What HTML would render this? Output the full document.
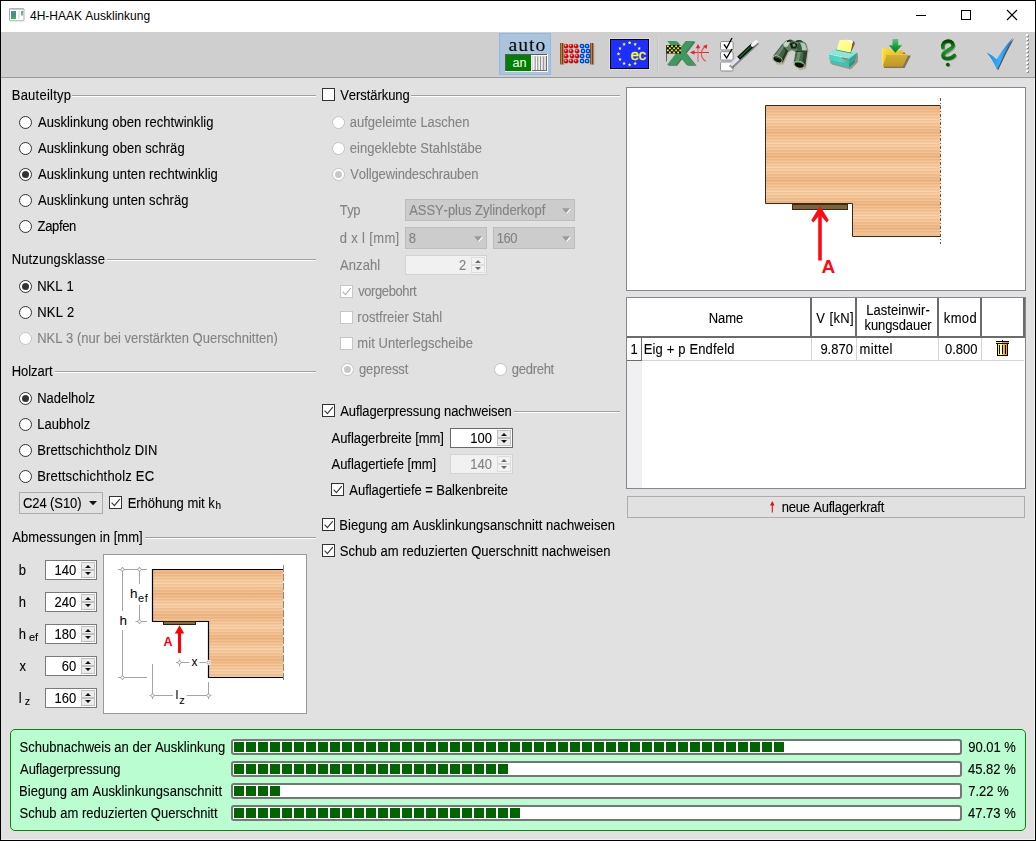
<!DOCTYPE html>
<html lang="de">
<head>
<meta charset="utf-8">
<title>4H-HAAK Ausklinkung</title>
<style>
*{box-sizing:border-box;margin:0;padding:0}
html,body{width:1036px;height:841px;overflow:hidden;background:#e1e1e1}
body{font-family:"Liberation Sans",Arial,sans-serif;font-size:13px;color:#000;position:relative;font-kerning:none}
#win{position:absolute;left:0;top:0;width:1036px;height:841px;background:#e1e1e1;overflow:hidden}
#frame{position:absolute;left:0;top:0;width:1036px;height:841px;border:1px solid #000;pointer-events:none;z-index:50}
#frame2{position:absolute;left:1px;top:78px;width:1034px;height:762px;border:1px solid #efefef;border-top:none;border-left:none;pointer-events:none;z-index:49}
.abs{position:absolute}
.t{position:absolute;white-space:nowrap;font-size:13px;line-height:16px;height:16px;transform:scaleY(1.075);transform-origin:0 12.5px;color:#000;-webkit-text-stroke:0.1px currentColor}
.t.dis{color:#838383}
.t sub{font-size:10px;vertical-align:baseline;position:relative;top:2px;line-height:0}
#title{position:absolute;left:0;top:0;width:1036px;height:32px;background:#fff}
#title .cap{position:absolute;left:30px;top:8px;font-size:12px;line-height:16px;white-space:nowrap}
#tb{position:absolute;left:0;top:32px;width:1036px;height:46px;background:#cfcfcf;border-bottom:1px solid #9a9a9a}
.gl{position:absolute;height:2px;border-top:1px solid #a0a0a0;border-bottom:1px solid #fff}
.rd{position:absolute;width:13px;height:13px;border-radius:50%;border:1px solid #333;background:#fff}
.rd.on::after{content:"";position:absolute;left:2px;top:2px;width:7px;height:7px;border-radius:50%;background:#333}
.rd.dis{border-color:#c2c2c2;background:#fff}
.rd.dis.on::after{background:#c8c8c8}
.cb{position:absolute;width:13px;height:13px;border:1px solid #333;background:#fff}
.cb.dis{border-color:#c6c6c6;background:#fff}
.cb svg{position:absolute;left:0;top:0;width:11px;height:11px}
.box{position:absolute;background:#fff;border:1px solid #7a7a7a}
.box.dis{background:#f1f1f1;border-color:#d2d2d2}
.box.foc{border-color:#6a6a6a}
.sp{position:absolute;width:14px;height:16px}
.sp i{position:absolute;left:0;width:14px;height:8px;background:#ebebeb;border:1px solid #c2c2c2}
.sp.dis i{background:#f2f2f2;border-color:#dedede}
.sp svg{position:absolute;left:0;top:0}
.cmb{position:absolute;background:#cccccc;border:1px solid #bcbcbc}
.cmbe{position:absolute;background:#e1e1e1;border:1px solid #adadad}
.btn{position:absolute;background:#e1e1e1;border:1px solid #adadad}
#res{position:absolute;left:10px;top:729px;width:1016px;height:102px;background:#bafdd0;border:1px solid #0a860a;border-radius:5px}
.pb{position:absolute;height:16px;background:#fff;border:2px solid #767676;border-radius:3px}
.pbf{position:absolute;left:1px;top:1px;height:10px}
</style>
</head>
<body>
<div id="win">
<div id="title"><span class="cap">4H-HAAK Ausklinkung</span><svg class="abs" style="left:8px;top:7px" width="18" height="16" viewBox="8 7 18 16"><defs><linearGradient id="gIc" x1="0" x2="0.4" y1="0" y2="1"><stop offset="0" stop-color="#6488b8"/><stop offset="0.5" stop-color="#3f8f8a"/><stop offset="1" stop-color="#3fae58"/></linearGradient><linearGradient id="gIc2" x1="0" x2="0" y1="0" y2="1"><stop offset="0" stop-color="#6a90c0"/><stop offset="1" stop-color="#8cc870"/></linearGradient></defs><rect x="9.5" y="8.5" width="14.5" height="12.3" rx="0.8" fill="#fff" stroke="#a9aeb4"/><rect x="9.5" y="8.5" width="14.5" height="1.2" fill="#b4b8be"/><rect x="11" y="11" width="5" height="8" fill="url(#gIc)"/><rect x="17.8" y="11" width="2" height="8" fill="#e6e6e6"/><rect x="21" y="11" width="2.2" height="4.6" fill="url(#gIc2)"/></svg><svg class="abs" style="left:910px;top:5px" width="115" height="22" viewBox="910 5 115 22" shape-rendering="crispEdges"><rect x="916" y="15" width="10" height="1" fill="#000"/><rect x="961.5" y="10.5" width="9" height="9" fill="none" stroke="#000" stroke-width="1"/><path d="M1007 10 L1017 20 M1017 10 L1007 20" stroke="#000" stroke-width="1.1" shape-rendering="geometricPrecision"/></svg></div>
<div id="tb"></div>
<svg class="abs" style="left:0;top:32px" width="1036" height="46" viewBox="0 32 1036 46">
<defs>
<radialGradient id="gRed" cx="0.4" cy="0.35" r="0.6"><stop offset="0" stop-color="#fff"/><stop offset="0.25" stop-color="#ff6060"/><stop offset="0.6" stop-color="#e80000"/><stop offset="1" stop-color="#c00000"/></radialGradient>
<radialGradient id="gBlu" cx="0.5" cy="0.5" r="0.5"><stop offset="0" stop-color="#20ffff"/><stop offset="0.45" stop-color="#00d8ff"/><stop offset="0.75" stop-color="#0020ff"/><stop offset="1" stop-color="#0000e0"/></radialGradient>
<linearGradient id="gBar" x1="0" x2="1" y1="0" y2="0"><stop offset="0" stop-color="#7a3a0c"/><stop offset="0.45" stop-color="#c08040"/><stop offset="0.6" stop-color="#8b4513"/><stop offset="1" stop-color="#6a3008"/></linearGradient>
<linearGradient id="gArr" x1="0" x2="0" y1="0" y2="1"><stop offset="0" stop-color="#58c880"/><stop offset="0.5" stop-color="#20a040"/><stop offset="1" stop-color="#0a7a20"/></linearGradient>
<linearGradient id="gFold" x1="0" x2="1" y1="0" y2="1"><stop offset="0" stop-color="#ffe030"/><stop offset="1" stop-color="#e0a818"/></linearGradient>
<linearGradient id="gFlap" x1="0" x2="0" y1="0" y2="1"><stop offset="0" stop-color="#d6b23a"/><stop offset="1" stop-color="#bf981e"/></linearGradient>
<linearGradient id="gChk" x1="0" x2="1" y1="0" y2="0"><stop offset="0" stop-color="#0a88f0"/><stop offset="0.5" stop-color="#38b0ff"/><stop offset="1" stop-color="#0a78e0"/></linearGradient>
<linearGradient id="gQ" x1="0" x2="0" y1="0" y2="1"><stop offset="0" stop-color="#004800"/><stop offset="0.5" stop-color="#169a28"/><stop offset="1" stop-color="#0a6a14"/></linearGradient>
<linearGradient id="gPaper" x1="0" x2="1" y1="0" y2="1"><stop offset="0" stop-color="#ffffa8"/><stop offset="1" stop-color="#fff870"/></linearGradient>
<linearGradient id="gPr" x1="0" x2="1" y1="0" y2="0"><stop offset="0" stop-color="#48d0c0"/><stop offset="0.6" stop-color="#58d8c8"/><stop offset="1" stop-color="#38b8a8"/></linearGradient>
<linearGradient id="gBino" x1="0" x2="1" y1="0" y2="1"><stop offset="0" stop-color="#7a9a78"/><stop offset="0.5" stop-color="#3e6044"/><stop offset="1" stop-color="#2c4832"/></linearGradient>
<filter id="sh" x="-20%" y="-20%" width="150%" height="150%"><feGaussianBlur stdDeviation="0.7"/></filter>
</defs>
<rect x="499.5" y="33.5" width="51" height="41" fill="#a9c4dc" stroke="#8cbbe8"/>
<text x="508.6" y="51" font-family="Liberation Serif, serif" font-size="19.5" letter-spacing="1.0" fill="#000">auto</text>
<rect x="505" y="54" width="43" height="18" fill="#fff"/>
<rect x="505" y="54" width="42" height="17" fill="#5a5a5a"/>
<rect x="506" y="55" width="25" height="16" fill="#008000"/>
<text x="512.6" y="67" font-family="Liberation Sans, sans-serif" font-size="12.6" fill="#fff">an</text>
<rect x="531" y="55" width="16" height="16" fill="#fff"/>
<rect x="532" y="56" width="15" height="15" fill="#6e6e6e"/>
<rect x="532" y="56" width="14" height="14" fill="#dcdcdc"/>
<rect x="534.5" y="56.5" width="1.2" height="13.5" fill="#8c8c8c"/>
<rect x="533.2" y="56.5" width="1.2" height="13.5" fill="#fafafa"/>
<rect x="537.2" y="56.5" width="1.2" height="13.5" fill="#8c8c8c"/>
<rect x="535.9000000000001" y="56.5" width="1.2" height="13.5" fill="#fafafa"/>
<rect x="539.9" y="56.5" width="1.2" height="13.5" fill="#8c8c8c"/>
<rect x="538.6" y="56.5" width="1.2" height="13.5" fill="#fafafa"/>
<rect x="542.6" y="56.5" width="1.2" height="13.5" fill="#8c8c8c"/>
<rect x="541.3000000000001" y="56.5" width="1.2" height="13.5" fill="#fafafa"/>
<rect x="560" y="43" width="3.4" height="21.5" fill="url(#gBar)"/>
<rect x="590" y="43" width="3.4" height="21.5" fill="url(#gBar)"/>
<rect x="563.4" y="44" width="1" height="21" fill="#8a8a8a" opacity="0.5"/><rect x="593.4" y="44" width="1" height="21" fill="#8a8a8a" opacity="0.5"/>
<rect x="563" y="45.7" width="27" height="0.8" fill="#8c8c84" opacity="0.8"/>
<circle cx="566.6" cy="46.6" r="2.2" fill="#444" opacity="0.4"/>
<circle cx="566" cy="46" r="2.2" fill="url(#gRed)"/>
<circle cx="571.6" cy="46.6" r="2.2" fill="#444" opacity="0.4"/>
<circle cx="571" cy="46" r="2.2" fill="url(#gRed)"/>
<circle cx="576.6" cy="46.6" r="2.2" fill="#444" opacity="0.4"/>
<circle cx="576" cy="46" r="2.2" fill="url(#gRed)"/>
<circle cx="582.6" cy="46.6" r="2.2" fill="#444" opacity="0.4"/>
<circle cx="582" cy="46" r="2.2" fill="url(#gBlu)"/>
<circle cx="587.6" cy="46.6" r="2.2" fill="#444" opacity="0.4"/>
<circle cx="587" cy="46" r="2.2" fill="url(#gBlu)"/>
<rect x="563" y="50.7" width="27" height="0.8" fill="#8c8c84" opacity="0.8"/>
<circle cx="566.6" cy="51.6" r="2.2" fill="#444" opacity="0.4"/>
<circle cx="566" cy="51" r="2.2" fill="url(#gRed)"/>
<circle cx="571.6" cy="51.6" r="2.2" fill="#444" opacity="0.4"/>
<circle cx="571" cy="51" r="2.2" fill="url(#gRed)"/>
<circle cx="577.6" cy="51.6" r="2.2" fill="#444" opacity="0.4"/>
<circle cx="577" cy="51" r="2.2" fill="url(#gRed)"/>
<circle cx="583.6" cy="51.6" r="2.2" fill="#444" opacity="0.4"/>
<circle cx="583" cy="51" r="2.2" fill="url(#gBlu)"/>
<circle cx="588.6" cy="51.6" r="2.2" fill="#444" opacity="0.4"/>
<circle cx="588" cy="51" r="2.2" fill="url(#gBlu)"/>
<rect x="563" y="55.7" width="27" height="0.8" fill="#8c8c84" opacity="0.8"/>
<circle cx="566.6" cy="56.6" r="2.2" fill="#444" opacity="0.4"/>
<circle cx="566" cy="56" r="2.2" fill="url(#gRed)"/>
<circle cx="572.6" cy="56.6" r="2.2" fill="#444" opacity="0.4"/>
<circle cx="572" cy="56" r="2.2" fill="url(#gRed)"/>
<circle cx="577.6" cy="56.6" r="2.2" fill="#444" opacity="0.4"/>
<circle cx="577" cy="56" r="2.2" fill="url(#gRed)"/>
<circle cx="582.6" cy="56.6" r="2.2" fill="#444" opacity="0.4"/>
<circle cx="582" cy="56" r="2.2" fill="url(#gBlu)"/>
<circle cx="588.6" cy="56.6" r="2.2" fill="#444" opacity="0.4"/>
<circle cx="588" cy="56" r="2.2" fill="url(#gBlu)"/>
<rect x="563" y="60.7" width="27" height="0.8" fill="#8c8c84" opacity="0.8"/>
<circle cx="566.6" cy="61.6" r="2.2" fill="#444" opacity="0.4"/>
<circle cx="566" cy="61" r="2.2" fill="url(#gRed)"/>
<circle cx="571.6" cy="61.6" r="2.2" fill="#444" opacity="0.4"/>
<circle cx="571" cy="61" r="2.2" fill="url(#gRed)"/>
<circle cx="576.6" cy="61.6" r="2.2" fill="#444" opacity="0.4"/>
<circle cx="576" cy="61" r="2.2" fill="url(#gRed)"/>
<circle cx="582.6" cy="61.6" r="2.2" fill="#444" opacity="0.4"/>
<circle cx="582" cy="61" r="2.2" fill="url(#gBlu)"/>
<circle cx="587.6" cy="61.6" r="2.2" fill="#444" opacity="0.4"/>
<circle cx="587" cy="61" r="2.2" fill="url(#gBlu)"/>
<rect x="609.5" y="38.5" width="40" height="31" fill="none" stroke="#dedede"/>
<rect x="610.5" y="39.5" width="38" height="29" fill="#1c2fff" stroke="#000"/>
<polygon points="629.60,40.90 630.10,42.11 631.41,42.21 630.41,43.06 630.72,44.34 629.60,43.65 628.48,44.34 628.79,43.06 627.79,42.21 629.10,42.11" fill="#ffff50"/>
<polygon points="635.15,42.39 635.65,43.60 636.96,43.70 635.96,44.55 636.27,45.82 635.15,45.14 634.03,45.82 634.34,44.55 633.34,43.70 634.65,43.60" fill="#ffff50"/>
<polygon points="639.21,46.45 639.71,47.66 641.02,47.76 640.02,48.61 640.33,49.89 639.21,49.20 638.10,49.89 638.40,48.61 637.41,47.76 638.71,47.66" fill="#ffff50"/>
<polygon points="635.15,61.61 635.65,62.83 636.96,62.93 635.96,63.78 636.27,65.05 635.15,64.36 634.03,65.05 634.34,63.78 633.34,62.93 634.65,62.83" fill="#ffff50"/>
<polygon points="629.60,63.10 630.10,64.31 631.41,64.41 630.41,65.26 630.72,66.54 629.60,65.85 628.48,66.54 628.79,65.26 627.79,64.41 629.10,64.31" fill="#ffff50"/>
<polygon points="624.05,61.61 624.55,62.83 625.86,62.93 624.86,63.78 625.17,65.05 624.05,64.36 622.93,65.05 623.24,63.78 622.24,62.93 623.55,62.83" fill="#ffff50"/>
<polygon points="619.99,57.55 620.49,58.76 621.79,58.86 620.80,59.71 621.10,60.99 619.99,60.30 618.87,60.99 619.18,59.71 618.18,58.86 619.49,58.76" fill="#ffff50"/>
<polygon points="618.50,52.00 619.00,53.21 620.31,53.31 619.31,54.16 619.62,55.44 618.50,54.75 617.38,55.44 617.69,54.16 616.69,53.31 618.00,53.21" fill="#ffff50"/>
<polygon points="619.99,46.45 620.49,47.66 621.79,47.76 620.80,48.61 621.10,49.89 619.99,49.20 618.87,49.89 619.18,48.61 618.18,47.76 619.49,47.66" fill="#ffff50"/>
<polygon points="624.05,42.39 624.55,43.60 625.86,43.70 624.86,44.55 625.17,45.82 624.05,45.14 622.93,45.82 623.24,44.55 622.24,43.70 623.55,43.60" fill="#ffff50"/>
<text x="630.6" y="60.1" font-family="Liberation Sans, sans-serif" font-size="15" letter-spacing="-0.5" fill="#ffff20" stroke="#ffff20" stroke-width="0.35">ec</text>
<rect x="657" y="37" width="1" height="36" fill="#c6c6c6"/><rect x="658" y="37" width="1" height="36" fill="#d8d8d8"/>
<g filter="url(#sh)" opacity="0.55" transform="translate(-0.4,-0.5)"><path d="M669 42.3 L678 42.3 L697 66.3 L688 66.3 Z M687.2 42.3 L696 42.3 L677.5 66.3 L668.5 66.3 Z" fill="#111"/></g>
<path d="M667.3 41 L676.2 41 L695.4 65 L686.5 65 Z" fill="#3b9a5c"/>
<path d="M685.6 41 L694.5 41 L675.8 65 L667 65 Z" fill="#3b9a5c"/>
<rect x="666" y="45" width="0.9" height="16.5" fill="#555"/>
<rect x="666.5" y="45" width="14.5" height="8.6" fill="#111"/>
<rect x="667.00" y="45.40" width="1.75" height="1.75" fill="#ffff00"/>
<rect x="671.10" y="45.40" width="1.75" height="1.75" fill="#ffff00"/>
<rect x="675.20" y="45.40" width="1.75" height="1.75" fill="#ffff00"/>
<rect x="679.30" y="45.40" width="1.75" height="1.75" fill="#ffff00"/>
<rect x="669.05" y="47.45" width="1.75" height="1.75" fill="#ffff00"/>
<rect x="673.15" y="47.45" width="1.75" height="1.75" fill="#ffff00"/>
<rect x="677.25" y="47.45" width="1.75" height="1.75" fill="#ffff00"/>
<rect x="667.00" y="49.50" width="1.75" height="1.75" fill="#ffff00"/>
<rect x="671.10" y="49.50" width="1.75" height="1.75" fill="#ffff00"/>
<rect x="675.20" y="49.50" width="1.75" height="1.75" fill="#ffff00"/>
<rect x="679.30" y="49.50" width="1.75" height="1.75" fill="#ffff00"/>
<rect x="669.05" y="51.55" width="1.75" height="1.75" fill="#ffff00"/>
<rect x="673.15" y="51.55" width="1.75" height="1.75" fill="#ffff00"/>
<rect x="677.25" y="51.55" width="1.75" height="1.75" fill="#ffff00"/>
<path d="M709 52.5 L693 52.5" stroke="#e8232d" stroke-width="1" fill="none"/><path d="M690 52.5 L694.5 50.2 L694.5 54.8 Z" fill="#e8232d"/>
<path d="M698 62 L698 47.5" stroke="#e8707a" stroke-width="1.3" fill="none"/><path d="M698 44 L700.3 48.3 L695.7 48.3 Z" fill="#e8232d"/>
<path d="M705.8 61.3 C700.5 58 699.6 51 705 46.5" stroke="#e8505a" stroke-width="1.1" fill="none"/><path d="M707.4 44.4 L706.6 49 L703 46 Z" fill="#e8232d"/>
<rect x="720.5" y="41.5" width="12.6" height="8.4" rx="1.2" fill="#fcfcfc" stroke="#8e8e8e"/>
<rect x="720.5" y="51.7" width="12.6" height="8.4" rx="1.2" fill="#fcfcfc" stroke="#8e8e8e"/>
<rect x="720.5" y="62.0" width="12.6" height="9" rx="1.2" fill="#fcfcfc" stroke="#8e8e8e"/>
<path d="M724 44.3 L726.6 48.2 L732 38" stroke="#000" stroke-width="1.3" fill="none"/>
<path d="M724 54 L726.6 58 L732 49" stroke="#000" stroke-width="1.3" fill="none"/>
<path d="M731.2 67.8 L758 43" stroke="#555" stroke-width="3" opacity="0.6" filter="url(#sh)"/>
<path d="M729.5 66.6 L732.3 64" stroke="#8a7a68" stroke-width="1.3"/>
<path d="M732 64.3 L739 57.8" stroke="#e4e0f2" stroke-width="3.4" stroke-linecap="round"/>
<path d="M738.6 58.2 L753 44.7" stroke="#04140a" stroke-width="4.2"/>
<path d="M739.4 57.2 L752.6 44.9" stroke="#1c6a28" stroke-width="1.3"/>
<path d="M752.6 45.1 L756.2 41.8" stroke="#f4f4fa" stroke-width="3.4" stroke-linecap="round"/>
<g>
<path d="M772.6 57 L782.5 43.6 L786.2 40.4 L790.5 39.2 L795 41 L800.5 39.8 L806 43 L807.6 49 L805.4 67.5 L799 69.5 L793.4 64 L795.6 51.5 L791.5 49.8 L788 51.4 L782.8 63.5 L776 63.8 Z" fill="#b8a078" opacity="0.75" filter="url(#sh)" transform="translate(0.9,0.9)"/>
<path d="M772.8 56.2 L782.5 43.8 L788.5 46 L788.2 51 L782.6 62.6 Z" fill="#3f6246"/>
<path d="M774.5 55.5 L782.8 45 L785 46 L777.5 57 Z" fill="#6c8c6c"/>
<path d="M780.5 61.5 L786.2 50 L788 51 L782.6 62.6 Z" fill="#223826"/>
<path d="M795.6 51 L807.4 50.5 L805 67 L793.6 63.2 Z" fill="#456a4c"/>
<path d="M797.5 52 L801 52 L798.5 62.5 L795.6 62 Z" fill="#6e8e70"/>
<path d="M803.5 52 L807.3 51 L805 67 L802 66 Z" fill="#2a4430"/>
<path d="M782.5 43.8 L786.2 40.6 L790.5 39.4 L795 41 L800.5 39.9 L805.8 43 L807.5 49 L807.4 51.4 L795.6 51.6 L791.5 49.8 L788 51.4 L784 47.5 Z" fill="#5e7e62"/>
<path d="M783 44 L786.5 41 L790 42.5 L787.5 46.5 L784.8 47 Z" fill="#c6d4c2"/>
<path d="M799.5 42.2 L804.8 43.5 L806.8 49 L806.6 51 L802 50.6 L801 45.5 Z" fill="#b4c6b4"/>
<path d="M788.6 40.4 L791 39.4 L793 41.6 L790.6 42.6 Z" fill="#30503a"/>
<path d="M798.6 40.3 L801 40 L802.6 42 L799.6 42.6 Z" fill="#30503a"/>
<path d="M789.8 43.4 L794 42 L797.6 44.6 L796 48.6 L791.4 48.4 Z" fill="#101c14"/>
<path d="M792.3 44 L795 43.6 L795.6 46.4 L793 46.8 Z" fill="#7e987e"/>
<path d="M783.6 47.6 L788 51.6 M795.8 51.4 L807 51" stroke="#16261a" stroke-width="1.1" fill="none" opacity="0.85"/>
<path d="M787 41.6 L790 40.2 M796 41.4 L799.4 40.6" stroke="#101c12" stroke-width="1.2" fill="none"/>
<path d="M797.6 44.6 L799.6 42.4 L801.2 45.6 L802 50.4 L798.4 50.6 L796.6 48.4 Z" fill="#3a5840"/>
<ellipse cx="777.3" cy="59.3" rx="5.5" ry="3.7" transform="rotate(25 777.3 59.3)" fill="#a6bea0"/>
<ellipse cx="777.6" cy="59.4" rx="4.3" ry="2.6" transform="rotate(25 777.6 59.4)" fill="#0a120c"/>
<ellipse cx="799.1" cy="64.7" rx="5.9" ry="3.8" transform="rotate(15 799.1 64.7)" fill="#a6bea0"/>
<ellipse cx="799.3" cy="64.8" rx="4.7" ry="2.7" transform="rotate(15 799.3 64.8)" fill="#0a120c"/>
<path d="M795.8 62.3 Q799.5 61.6 803 63.6" stroke="#6a9a50" stroke-width="0.9" fill="none"/>
<path d="M775 57 Q778.2 57 780.6 59" stroke="#5a8a48" stroke-width="0.8" fill="none"/>
</g>
<path d="M829.5 54 L837 48 L857.2 52.5 L857.2 61 L850 68.6 L831 63.5 L829.5 62 Z" fill="#6a4a30" opacity="0.45" filter="url(#sh)" transform="translate(0.8,0.9)"/>
<path d="M829 53.5 L836.5 48 L856.3 52.3 L849 57.8 Z" fill="#8ee6d8"/>
<path d="M829 53.5 L849 57.8 L849 64.2 L829.3 60 Z" fill="url(#gPr)"/>
<path d="M849 57.8 L856.3 52.3 L856.3 58.5 L849 64.2 Z" fill="#35a596"/>
<path d="M829.2 54 L849 58.2 L856 52.9" stroke="#d4faf4" stroke-width="0.9" fill="none" opacity="0.9"/>
<path d="M831 60.4 L849 64.2 L849 67.6 L831.5 63.3 Z" fill="#3cc4b4"/>
<path d="M849 64.2 L855 59.5 L855 62.6 L849 67.6 Z" fill="#2a9488"/>
<path d="M836.2 50.2 L851.5 53.6 L851 52 L836.8 49 Z" fill="#1c8a7c"/>
<path d="M852.4 40.8 Q855.2 41.6 854.6 44.2 L851.6 51 L850.6 52 Z" fill="#5a4228" opacity="0.8"/>
<path d="M836.8 49.8 L839.5 40.3 Q846 39 852.8 40.9 Q851.8 46 850.4 52.6 Z" fill="url(#gPaper)"/>
<path d="M847 39.8 Q850 40 852.8 40.9 L852.2 43.4 Z" fill="#fffff4"/>
<rect x="842" y="57.4" width="5.6" height="1.4" fill="#d8604c" transform="rotate(8 842 57)"/>
<path d="M883.5 67.5 L904 67.5 L910.3 55 L904.5 55 L904.5 52 L884 52 Z" fill="#3a2810" opacity="0.55" filter="url(#sh)" transform="translate(0.6,0.6)"/>
<path d="M882.1 48.3 L888.6 48.3 L890.8 50.4 L902.9 50.4 L902.9 66.3 L882.1 66.3 Z" fill="url(#gFold)"/>
<path d="M882.1 48.3 L883.2 48.3 L883.2 66.3 L882.1 66.3 Z" fill="#ffe860"/>
<path d="M886.9 54.1 L908.7 54.1 L902.9 66.4 L882.8 66.4 Z" fill="url(#gFlap)"/>
<path d="M886.9 54.1 L908.7 54.1 L908.4 54.9 L887.3 54.9 Z" fill="#e8c850"/>
<path d="M892.5 38.9 L898.2 38.9 L898.2 45.3 L902.1 45.3 L895.3 52.7 L888.8 45.3 L892.5 45.3 Z" fill="url(#gArr)"/>
<g fill="none" stroke-linecap="round">
<path d="M943.6 48.6 C942 41.4 952.6 39.6 953.9 46 C954.4 50.6 943.9 51.6 943.7 56.4 C944.2 61.2 952.3 59.9 955.2 56.4" stroke="#7a5a40" stroke-width="3.4" opacity="0.55" filter="url(#sh)"/>
<path d="M942.8 47.6 C941.2 40.4 951.8 38.6 953.1 45 C953.6 49.6 943.1 50.6 942.9 55.4 C943.4 60.2 951.5 58.9 954.4 55.4" stroke="url(#gQ)" stroke-width="3.6"/>
</g>
<circle cx="948.6" cy="65.4" r="1.8" fill="#7a5a40" opacity="0.5"/><circle cx="947.8" cy="64.6" r="1.85" fill="#045408"/>
<path d="M987.8 53.4 Q993.5 56.5 997.6 60.6 Q1005 48 1014 38.6 Q1005.5 54 998 70.6 Q993.5 60 987.8 53.4 Z" fill="#2a1a10" opacity="0.7" filter="url(#sh)"/>
<path d="M986.7 52.6 Q992.5 55.5 996.6 59.6 Q1004 47 1013 37.8 Q1004.5 53 997 69.7 Q992.5 59 986.7 52.6 Z" fill="url(#gChk)"/>
<rect x="1027" y="35.0" width="2" height="2" fill="#8e8e8e"/><rect x="1026" y="34.0" width="2" height="2" fill="#fff"/>
<rect x="1027" y="39.0" width="2" height="2" fill="#8e8e8e"/><rect x="1026" y="38.0" width="2" height="2" fill="#fff"/>
<rect x="1027" y="43.0" width="2" height="2" fill="#8e8e8e"/><rect x="1026" y="42.0" width="2" height="2" fill="#fff"/>
<rect x="1027" y="47.0" width="2" height="2" fill="#8e8e8e"/><rect x="1026" y="46.0" width="2" height="2" fill="#fff"/>
<rect x="1027" y="51.0" width="2" height="2" fill="#8e8e8e"/><rect x="1026" y="50.0" width="2" height="2" fill="#fff"/>
<rect x="1027" y="55.0" width="2" height="2" fill="#8e8e8e"/><rect x="1026" y="54.0" width="2" height="2" fill="#fff"/>
<rect x="1027" y="59.0" width="2" height="2" fill="#8e8e8e"/><rect x="1026" y="58.0" width="2" height="2" fill="#fff"/>
<rect x="1027" y="63.0" width="2" height="2" fill="#8e8e8e"/><rect x="1026" y="62.0" width="2" height="2" fill="#fff"/>
<rect x="1027" y="67.0" width="2" height="2" fill="#8e8e8e"/><rect x="1026" y="66.0" width="2" height="2" fill="#fff"/>
<rect x="1027" y="71.0" width="2" height="2" fill="#8e8e8e"/><rect x="1026" y="70.0" width="2" height="2" fill="#fff"/>
</svg>
<span class="t " style="left:11.73px;top:87.50px;letter-spacing:0.247px;">Bauteiltyp</span>
<div class="gl" style="left:72px;top:95px;width:244px"></div>
<div class="rd" style="left:19px;top:116px"></div>
<span class="t " style="left:37.97px;top:114.50px;letter-spacing:0.050px;">Ausklinkung oben rechtwinklig</span>
<div class="rd" style="left:19px;top:142px"></div>
<span class="t " style="left:37.97px;top:140.50px;letter-spacing:0.064px;">Ausklinkung oben schräg</span>
<div class="rd on" style="left:19px;top:168px"></div>
<span class="t " style="left:37.97px;top:166.50px;letter-spacing:0.072px;">Ausklinkung unten rechtwinklig</span>
<div class="rd" style="left:19px;top:194px"></div>
<span class="t " style="left:37.97px;top:192.50px;letter-spacing:0.069px;">Ausklinkung unten schräg</span>
<div class="rd" style="left:19px;top:220px"></div>
<span class="t " style="left:37.59px;top:218.50px;letter-spacing:-0.363px;">Zapfen</span>
<span class="t " style="left:11.73px;top:251.50px;letter-spacing:0.114px;">Nutzungsklasse</span>
<div class="gl" style="left:107px;top:259px;width:209px"></div>
<div class="rd on" style="left:19px;top:280px"></div>
<span class="t " style="left:37.13px;top:278.50px;letter-spacing:0.093px;">NKL 1</span>
<div class="rd" style="left:19px;top:306px"></div>
<span class="t " style="left:37.13px;top:304.50px;letter-spacing:0.247px;">NKL 2</span>
<div class="rd dis" style="left:19px;top:332px"></div>
<span class="t dis" style="left:37.13px;top:330.50px;letter-spacing:0.004px;">NKL 3 (nur bei verstärkten Querschnitten)</span>
<span class="t " style="left:11.73px;top:363.50px;letter-spacing:-0.036px;">Holzart</span>
<div class="gl" style="left:55px;top:371px;width:261px"></div>
<div class="rd on" style="left:19px;top:392px"></div>
<span class="t " style="left:37.13px;top:390.50px;">Nadelholz</span>
<div class="rd" style="left:19px;top:418px"></div>
<span class="t " style="left:37.13px;top:416.50px;letter-spacing:0.035px;">Laubholz</span>
<div class="rd" style="left:19px;top:444px"></div>
<span class="t " style="left:37.13px;top:442.50px;letter-spacing:0.135px;">Brettschichtholz DIN</span>
<div class="rd" style="left:19px;top:470px"></div>
<span class="t " style="left:37.13px;top:468.50px;letter-spacing:0.196px;">Brettschichtholz EC</span>
<div class="cmbe" style="left:19px;top:492px;width:84px;height:22px"></div>
<span class="t " style="left:22.94px;top:495.50px;letter-spacing:-0.085px;">C24 (S10)</span>
<svg class="abs" style="left:88px;top:500px" width="10" height="6" viewBox="0 0 10 6"><path d="M1 1 L9 1 L5 5.2 Z" fill="#111"/></svg>
<div class="cb" style="left:109px;top:496px"><svg viewBox="0 0 11 11"><path d="M1.6 5.6 L4.4 8.6 L9.8 2.2" fill="none" stroke="#3a3a3a" stroke-width="1.15"/></svg></div>
<span class="t " style="left:127.63px;top:495.50px;letter-spacing:-0.022px;">Erhöhung mit k</span>
<span class="t " style="left:215.61px;top:498.34px;font-size:10px;transform-origin:0 11.46px;">h</span>
<span class="t " style="left:12.27px;top:529.50px;letter-spacing:0.062px;">Abmessungen in [mm]</span>
<div class="gl" style="left:145px;top:537px;width:171px"></div>
<span class="t " style="left:18.76px;top:562.50px;">b</span>
<div class="box" style="left:45px;top:560px;width:52px;height:20px"></div>
<div class="sp" style="left:81px;top:562px"><i style="top:0"></i><i style="top:8px"></i><svg width="14" height="16" viewBox="0 0 14 16"><path d="M4 6 L7 3 L10 6 Z M4 10 L7 13 L10 10 Z" fill="#111"/></svg></div>
<span class="t " style="left:54.52px;top:562.50px;">140</span>
<span class="t " style="left:18.70px;top:594.50px;">h</span>
<div class="box" style="left:45px;top:592px;width:52px;height:20px"></div>
<div class="sp" style="left:81px;top:594px"><i style="top:0"></i><i style="top:8px"></i><svg width="14" height="16" viewBox="0 0 14 16"><path d="M4 6 L7 3 L10 6 Z M4 10 L7 13 L10 10 Z" fill="#111"/></svg></div>
<span class="t " style="left:54.52px;top:594.50px;">240</span>
<span class="t " style="left:18.70px;top:626.50px;">h</span>
<span class="t " style="left:28.96px;top:628.79px;font-size:11px;transform-origin:0 11.81px;">ef</span>
<div class="box" style="left:45px;top:624px;width:52px;height:20px"></div>
<div class="sp" style="left:81px;top:626px"><i style="top:0"></i><i style="top:8px"></i><svg width="14" height="16" viewBox="0 0 14 16"><path d="M4 6 L7 3 L10 6 Z M4 10 L7 13 L10 10 Z" fill="#111"/></svg></div>
<span class="t " style="left:54.52px;top:626.50px;">180</span>
<span class="t " style="left:19.45px;top:658.50px;">x</span>
<div class="box" style="left:45px;top:656px;width:52px;height:20px"></div>
<div class="sp" style="left:81px;top:658px"><i style="top:0"></i><i style="top:8px"></i><svg width="14" height="16" viewBox="0 0 14 16"><path d="M4 6 L7 3 L10 6 Z M4 10 L7 13 L10 10 Z" fill="#111"/></svg></div>
<span class="t " style="left:61.75px;top:658.50px;">60</span>
<span class="t " style="left:18.72px;top:690.50px;">l</span>
<span class="t " style="left:24.64px;top:692.79px;font-size:11px;transform-origin:0 11.81px;">z</span>
<div class="box" style="left:45px;top:688px;width:52px;height:20px"></div>
<div class="sp" style="left:81px;top:690px"><i style="top:0"></i><i style="top:8px"></i><svg width="14" height="16" viewBox="0 0 14 16"><path d="M4 6 L7 3 L10 6 Z M4 10 L7 13 L10 10 Z" fill="#111"/></svg></div>
<span class="t " style="left:54.52px;top:690.50px;">160</span>
<div class="box" style="left:103px;top:554px;width:204px;height:160px;border-color:#9a9a9a"></div>
<svg class="abs" style="left:104px;top:555px" width="202" height="158" viewBox="104 555 202 158">
<defs><linearGradient id="wdB" gradientUnits="userSpaceOnUse" x1="0" y1="572" x2="0" y2="594" spreadMethod="repeat"><stop offset="0" stop-color="#ebb27e"/><stop offset="0.22" stop-color="#f1be8d"/><stop offset="0.5" stop-color="#f7cda3"/><stop offset="0.78" stop-color="#f1be8d"/><stop offset="1" stop-color="#ebb27e"/></linearGradient><pattern id="wdBs" patternUnits="userSpaceOnUse" x="0" y="572" width="8" height="3"><rect x="0" y="0" width="8" height="1" fill="#d89a60" opacity="0.16"/><rect x="0" y="2" width="8" height="1" fill="#fff" opacity="0.12"/></pattern></defs>
<path d="M152.5 569.5 L283.5 569.5 L283.5 677.5 L208.5 677.5 L208.5 621.5 L152.5 621.5 Z" fill="url(#wdB)"/>
<path d="M152.5 569.5 L283.5 569.5 L283.5 677.5 L208.5 677.5 L208.5 621.5 L152.5 621.5 Z" fill="url(#wdBs)"/>
<g stroke="#a4a4a4" stroke-width="1" fill="none">
<path d="M122.5 567 L122.5 611 M122.5 630 L122.5 680"/>
<path d="M118 569.5 L147 569.5 M118 677.5 L147 677.5"/>
<path d="M139.5 567 L139.5 584 M139.5 605 L139.5 624"/>
<path d="M135.5 621.5 L147 621.5"/>
<path d="M176 662.5 L189.5 662.5 M199.5 662.5 L211.5 662.5"/>
<path d="M179.5 659.5 L179.5 666.5 M208.5 659.5 L208.5 666.5"/>
<path d="M149.5 695.5 L173 695.5 M186.5 695.5 L211.5 695.5"/>
<path d="M152.5 664 L152.5 699 M208.5 682 L208.5 699"/>
</g>
<circle cx="122.5" cy="569.5" r="1.6" fill="#fff" stroke="#a4a4a4" stroke-width="1"/>
<circle cx="139.5" cy="569.5" r="1.6" fill="#fff" stroke="#a4a4a4" stroke-width="1"/>
<circle cx="139.5" cy="621.5" r="1.6" fill="#fff" stroke="#a4a4a4" stroke-width="1"/>
<circle cx="122.5" cy="677.5" r="1.6" fill="#fff" stroke="#a4a4a4" stroke-width="1"/>
<circle cx="179.5" cy="662.5" r="1.6" fill="#fff" stroke="#a4a4a4" stroke-width="1"/>
<circle cx="208.5" cy="662.5" r="1.6" fill="#fff" stroke="#a4a4a4" stroke-width="1"/>
<circle cx="152.5" cy="695.5" r="1.6" fill="#fff" stroke="#a4a4a4" stroke-width="1"/>
<circle cx="208.5" cy="695.5" r="1.6" fill="#fff" stroke="#a4a4a4" stroke-width="1"/>
<path d="M283.5 569.5 L152.5 569.5 L152.5 621.5 L208.5 621.5 L208.5 677.5 L283.5 677.5" fill="none" stroke="#000" stroke-width="1.2"/>
<path d="M283.5 565 L283.5 682" stroke="#8a8a8a" stroke-width="1" stroke-dasharray="7 2" fill="none"/>
<rect x="163.5" y="621.5" width="32" height="3" fill="#8a6a40" stroke="#2a2010" stroke-width="1"/>
<circle cx="208.5" cy="662.5" r="1.9" fill="#fff" stroke="#fff" stroke-width="1.6"/><circle cx="208.5" cy="662.5" r="1.6" fill="#fff" stroke="#a4a4a4" stroke-width="1"/>
<rect x="178" y="632" width="3" height="21" fill="#ff0000"/>
<path d="M179.5 625.3 L184.2 633.6 L174.8 633.6 Z" fill="#ff0000"/>
<text x="163.6" y="645.8" font-family="Liberation Sans, sans-serif" font-weight="bold" font-size="12.5" fill="#ff0000">A</text>
<text x="130" y="597.6" font-family="Liberation Sans, sans-serif" fill="#000" font-size="13.5">h</text><text x="138" y="601.8" font-family="Liberation Sans, sans-serif" fill="#000" font-size="11" letter-spacing="0.6">ef</text>
<text x="119.4" y="624.6" font-family="Liberation Sans, sans-serif" fill="#000" font-size="13.5">h</text>
<text x="191.4" y="666" font-family="Liberation Sans, sans-serif" fill="#000" font-size="12">x</text>
<text x="175.6" y="699" font-family="Liberation Sans, sans-serif" fill="#000" font-size="12.5">l</text><text x="179.2" y="703.6" font-family="Liberation Sans, sans-serif" fill="#000" font-size="11">z</text>
</svg>
<div class="cb" style="left:322px;top:88px"></div>
<span class="t " style="left:340.14px;top:87.50px;letter-spacing:-0.050px;">Verstärkung</span>
<div class="gl" style="left:411px;top:95px;width:209px"></div>
<div class="rd dis" style="left:331.5px;top:115.5px"></div>
<span class="t dis" style="left:349.85px;top:114.50px;letter-spacing:-0.021px;">aufgeleimte Laschen</span>
<div class="rd dis" style="left:331.5px;top:141.5px"></div>
<span class="t dis" style="left:349.85px;top:140.50px;letter-spacing:0.033px;">eingeklebte Stahlstäbe</span>
<div class="rd on dis" style="left:331.5px;top:167.5px"></div>
<span class="t dis" style="left:350.34px;top:166.50px;letter-spacing:-0.137px;">Vollgewindeschrauben</span>
<span class="t dis" style="left:339.71px;top:202.50px;letter-spacing:-0.417px;">Typ</span>
<div class="cmb" style="left:405px;top:199px;width:170px;height:22px"></div>
<span class="t dis" style="left:409.17px;top:202.50px;letter-spacing:-0.056px;">ASSY-plus Zylinderkopf</span>
<svg class="abs" style="left:561px;top:208px" width="10" height="7" viewBox="0 0 10 7"><path d="M5.6 5.4 L9.4 1.2" stroke="#fff" stroke-width="1.2" fill="none"/><path d="M1 0.3 L9 0.3 L5 4.9 Z" fill="#9a9a9a"/></svg>
<span class="t dis" style="left:339.75px;top:230.50px;letter-spacing:0.349px;">d x l [mm]</span>
<div class="cmb" style="left:405px;top:227px;width:82px;height:22px"></div>
<span class="t dis" style="left:408.84px;top:230.50px;">8</span>
<svg class="abs" style="left:473px;top:236px" width="10" height="7" viewBox="0 0 10 7"><path d="M5.6 5.4 L9.4 1.2" stroke="#fff" stroke-width="1.2" fill="none"/><path d="M1 0.3 L9 0.3 L5 4.9 Z" fill="#9a9a9a"/></svg>
<div class="cmb" style="left:493px;top:227px;width:82px;height:22px"></div>
<span class="t dis" style="left:496.81px;top:230.50px;letter-spacing:-0.496px;">160</span>
<svg class="abs" style="left:561px;top:236px" width="10" height="7" viewBox="0 0 10 7"><path d="M5.6 5.4 L9.4 1.2" stroke="#fff" stroke-width="1.2" fill="none"/><path d="M1 0.3 L9 0.3 L5 4.9 Z" fill="#9a9a9a"/></svg>
<span class="t dis" style="left:339.97px;top:257.50px;letter-spacing:0.109px;">Anzahl</span>
<div class="box dis" style="left:405px;top:255px;width:82px;height:20px"></div>
<div class="sp dis" style="left:471px;top:257px"><i style="top:0"></i><i style="top:8px"></i><svg width="14" height="16" viewBox="0 0 14 16"><path d="M4 6 L7 3 L10 6 Z M4 10 L7 13 L10 10 Z" fill="#6c6c6c"/></svg></div>
<span class="t dis" style="left:458.92px;top:257.50px;">2</span>
<div class="cb dis" style="left:340px;top:284.5px"><svg viewBox="0 0 11 11"><path d="M1.6 5.6 L4.4 8.6 L9.8 2.2" fill="none" stroke="#b4b4b4" stroke-width="1.15"/></svg></div>
<span class="t dis" style="left:358.16px;top:283.50px;letter-spacing:-0.401px;">vorgebohrt</span>
<div class="cb dis" style="left:340px;top:310.5px"></div>
<span class="t dis" style="left:357.34px;top:309.50px;letter-spacing:0.013px;">rostfreier Stahl</span>
<div class="cb dis" style="left:340px;top:336.5px"></div>
<span class="t dis" style="left:357.34px;top:335.50px;letter-spacing:0.047px;">mit Unterlegscheibe</span>
<div class="rd on dis" style="left:340.5px;top:362.5px"></div>
<span class="t dis" style="left:358.95px;top:361.50px;letter-spacing:-0.060px;">gepresst</span>
<div class="rd dis" style="left:493.5px;top:362.5px"></div>
<span class="t dis" style="left:511.85px;top:361.50px;letter-spacing:-0.292px;">gedreht</span>
<div class="cb" style="left:322px;top:404px"><svg viewBox="0 0 11 11"><path d="M1.6 5.6 L4.4 8.6 L9.8 2.2" fill="none" stroke="#3a3a3a" stroke-width="1.15"/></svg></div>
<span class="t " style="left:340.27px;top:403.50px;letter-spacing:-0.100px;">Auflagerpressung nachweisen</span>
<div class="gl" style="left:514px;top:411px;width:106px"></div>
<span class="t " style="left:331.57px;top:430.50px;letter-spacing:-0.060px;">Auflagerbreite [mm]</span>
<div class="box foc" style="left:450px;top:428px;width:63px;height:20px"></div>
<div class="sp" style="left:497px;top:430px"><i style="top:0"></i><i style="top:8px"></i><svg width="14" height="16" viewBox="0 0 14 16"><path d="M4 6 L7 3 L10 6 Z M4 10 L7 13 L10 10 Z" fill="#111"/></svg></div>
<span class="t " style="left:470.32px;top:430.50px;">100</span>
<span class="t " style="left:331.57px;top:456.50px;letter-spacing:-0.049px;">Auflagertiefe [mm]</span>
<div class="box dis" style="left:450px;top:454px;width:63px;height:20px"></div>
<div class="sp dis" style="left:497px;top:456px"><i style="top:0"></i><i style="top:8px"></i><svg width="14" height="16" viewBox="0 0 14 16"><path d="M4 6 L7 3 L10 6 Z M4 10 L7 13 L10 10 Z" fill="#6c6c6c"/></svg></div>
<span class="t dis" style="left:470.32px;top:456.50px;">140</span>
<div class="cb" style="left:331px;top:483px"><svg viewBox="0 0 11 11"><path d="M1.6 5.6 L4.4 8.6 L9.8 2.2" fill="none" stroke="#3a3a3a" stroke-width="1.15"/></svg></div>
<span class="t " style="left:349.37px;top:482.50px;letter-spacing:-0.055px;">Auflagertiefe = Balkenbreite</span>
<div class="cb" style="left:322px;top:518px"><svg viewBox="0 0 11 11"><path d="M1.6 5.6 L4.4 8.6 L9.8 2.2" fill="none" stroke="#3a3a3a" stroke-width="1.15"/></svg></div>
<span class="t " style="left:339.33px;top:517.50px;letter-spacing:0.043px;">Biegung am Ausklinkungsanschnitt nachweisen</span>
<div class="cb" style="left:322px;top:544px"><svg viewBox="0 0 11 11"><path d="M1.6 5.6 L4.4 8.6 L9.8 2.2" fill="none" stroke="#3a3a3a" stroke-width="1.15"/></svg></div>
<span class="t " style="left:339.81px;top:543.50px;letter-spacing:0.029px;">Schub am reduzierten Querschnitt nachweisen</span>
<div class="box" style="left:626px;top:87px;width:400px;height:204px;border-color:#828790"></div>
<svg class="abs" style="left:627px;top:88px" width="398" height="202" viewBox="627 88 398 202">
<defs><linearGradient id="wdA" gradientUnits="userSpaceOnUse" x1="0" y1="108" x2="0" y2="132" spreadMethod="repeat"><stop offset="0" stop-color="#ebb27e"/><stop offset="0.22" stop-color="#f1be8d"/><stop offset="0.5" stop-color="#f7cda3"/><stop offset="0.78" stop-color="#f1be8d"/><stop offset="1" stop-color="#ebb27e"/></linearGradient><pattern id="wdAs" patternUnits="userSpaceOnUse" x="0" y="108" width="8" height="3"><rect x="0" y="0" width="8" height="1" fill="#d89a60" opacity="0.16"/><rect x="0" y="2" width="8" height="1" fill="#fff" opacity="0.12"/></pattern></defs>
<path d="M765.5 105.5 L940.5 105.5 L940.5 236.5 L852.5 236.5 L852.5 203.5 L765.5 203.5 Z" fill="url(#wdA)"/>
<path d="M765.5 105.5 L940.5 105.5 L940.5 236.5 L852.5 236.5 L852.5 203.5 L765.5 203.5 Z" fill="url(#wdAs)"/>
<path d="M940.5 105.5 L765.5 105.5 L765.5 203.5 L852.5 203.5 L852.5 236.5 L940.5 236.5" fill="none" stroke="#3a2a1a" stroke-width="1"/>
<path d="M940.5 98 L940.5 244" stroke="#3a3a3a" stroke-width="1" stroke-dasharray="3 2 1 2" opacity="0.8" fill="none"/>
<rect x="792.5" y="204.5" width="55" height="5" fill="#7d6238" stroke="#3a2c18" stroke-width="1"/>
<rect x="818.2" y="212" width="3.6" height="48.5" fill="#ff0a14"/>
<path d="M820 206 L828.8 220.2 L826.6 222.4 L820 214.6 L813.4 222.4 L811.2 220.2 Z" fill="#ff0a14"/>
<text x="821.6" y="272.6" font-family="Liberation Sans, sans-serif" font-weight="bold" font-size="19" fill="#ff0a14">A</text>
</svg>
<div class="box" style="left:626px;top:297px;width:400px;height:192px;border-color:#828790"></div>
<div class="abs" style="left:627px;top:298px;width:398px;height:190px;background:#fff;overflow:hidden"></div>
<div class="abs" style="left:627px;top:338px;width:15px;height:150px;background:#f0f0f0"></div>
<div class="abs" style="left:627px;top:298px;width:185px;height:40px;background:#fff;border-right:2px solid #6b6b6b;border-bottom:2px solid #6b6b6b"></div>
<div class="abs" style="left:812px;top:298px;width:45px;height:40px;background:#fff;border-right:2px solid #6b6b6b;border-bottom:2px solid #6b6b6b"></div>
<div class="abs" style="left:857px;top:298px;width:82px;height:40px;background:#fff;border-right:2px solid #6b6b6b;border-bottom:2px solid #6b6b6b"></div>
<div class="abs" style="left:939px;top:298px;width:43px;height:40px;background:#fff;border-right:2px solid #6b6b6b;border-bottom:2px solid #6b6b6b"></div>
<div class="abs" style="left:982px;top:298px;width:43px;height:40px;background:#fff;border-right:2px solid #6b6b6b;border-bottom:2px solid #6b6b6b"></div>
<div class="abs" style="left:642px;top:360px;width:382px;height:1px;background:#d4d4d4"></div>
<div class="abs" style="left:811px;top:338px;width:1px;height:23px;background:#d4d4d4"></div>
<div class="abs" style="left:856px;top:338px;width:1px;height:23px;background:#d4d4d4"></div>
<div class="abs" style="left:938px;top:338px;width:1px;height:23px;background:#d4d4d4"></div>
<div class="abs" style="left:981px;top:338px;width:1px;height:23px;background:#d4d4d4"></div>
<div class="abs" style="left:627px;top:338px;width:15px;height:23px;background:#fff;border-right:1px solid #6b6b6b;border-bottom:1px solid #6b6b6b"></div>
<span class="t " style="left:708.66px;top:310.50px;">Name</span>
<span class="t " style="left:816.34px;top:310.50px;letter-spacing:0.398px;">V [kN]</span>
<span class="t " style="left:866.13px;top:303.00px;letter-spacing:0.079px;">Lasteinwir-</span>
<span class="t " style="left:864.52px;top:318.20px;letter-spacing:-0.094px;">kungsdauer</span>
<span class="t " style="left:943.72px;top:310.50px;letter-spacing:0.408px;">kmod</span>
<span class="t " style="left:630.39px;top:341.50px;">1</span>
<span class="t " style="left:643.73px;top:341.50px;letter-spacing:0.155px;">Eig + p Endfeld</span>
<span class="t " style="left:820.38px;top:341.50px;">9.870</span>
<span class="t " style="left:859.54px;top:341.50px;letter-spacing:0.355px;">mittel</span>
<span class="t " style="left:944.98px;top:341.50px;">0.800</span>
<svg class="abs" style="left:995px;top:339px" width="15" height="18" viewBox="995 339 15 18" shape-rendering="crispEdges"><rect x="1002" y="340" width="1" height="1" fill="#000"/><rect x="996" y="341" width="13" height="1" fill="#000"/><rect x="996" y="342" width="6" height="1" fill="#ffff00"/><rect x="1000" y="342" width="2" height="1" fill="#fff"/><rect x="1002" y="342" width="7" height="1" fill="#f0a030"/><rect x="996" y="343" width="13" height="1" fill="#000"/><rect x="997" y="344" width="11" height="12" fill="#000"/><rect x="998" y="344" width="4" height="11" fill="#ffff00"/><rect x="1000" y="344" width="2" height="11" fill="#fff"/><rect x="1002" y="344" width="2" height="11" fill="#ffd000"/><rect x="1004" y="344" width="3" height="11" fill="#f0a030"/><rect x="999" y="345" width="1" height="9" fill="#000"/><rect x="1002" y="345" width="1" height="9" fill="#000"/><rect x="1005" y="345" width="1" height="9" fill="#000"/></svg>
<div class="btn" style="left:627px;top:496px;width:398px;height:22px"></div>
<svg class="abs" style="left:768px;top:499px" width="9" height="15" viewBox="768 499 9 15"><path d="M772.3 512.4 L772.3 504" stroke="#e01020" stroke-width="1.1"/><path d="M772.3 501 L774.6 505.4 L770 505.4 Z" fill="#e01020"/></svg>
<span class="t " style="left:781.84px;top:499.50px;letter-spacing:-0.222px;">neue Auflagerkraft</span>
<div id="res"></div>
<span class="t " style="left:19.51px;top:739.50px;letter-spacing:0.013px;">Schubnachweis an der Ausklinkung</span>
<div class="pb" style="left:231px;top:739px;width:731px"><div class="pbf" style="width:550px;background:repeating-linear-gradient(90deg,#006400 0,#006400 10px,#fff 10px,#fff 12px)"></div></div>
<span class="t " style="left:968.29px;top:739.50px;letter-spacing:-0.038px;">90.01 %</span>
<span class="t " style="left:20.07px;top:761.50px;letter-spacing:-0.096px;">Auflagerpressung</span>
<div class="pb" style="left:231px;top:761px;width:731px"><div class="pbf" style="width:274px;background:repeating-linear-gradient(90deg,#006400 0,#006400 10px,#fff 10px,#fff 12px)"></div></div>
<span class="t " style="left:967.90px;top:761.50px;letter-spacing:0.027px;">45.82 %</span>
<span class="t " style="left:19.03px;top:783.50px;letter-spacing:0.046px;">Biegung am Ausklinkungsanschnitt</span>
<div class="pb" style="left:231px;top:783px;width:731px"><div class="pbf" style="width:46px;background:repeating-linear-gradient(90deg,#006400 0,#006400 10px,#fff 10px,#fff 12px)"></div></div>
<span class="t " style="left:968.23px;top:783.50px;">7.22 %</span>
<span class="t " style="left:19.51px;top:805.50px;letter-spacing:0.026px;">Schub am reduzierten Querschnitt</span>
<div class="pb" style="left:231px;top:805px;width:731px"><div class="pbf" style="width:286px;background:repeating-linear-gradient(90deg,#006400 0,#006400 10px,#fff 10px,#fff 12px)"></div></div>
<span class="t " style="left:967.90px;top:805.50px;letter-spacing:0.027px;">47.73 %</span>
<div id="frame2"></div><div id="frame"></div>
</div>
</body>
</html>
